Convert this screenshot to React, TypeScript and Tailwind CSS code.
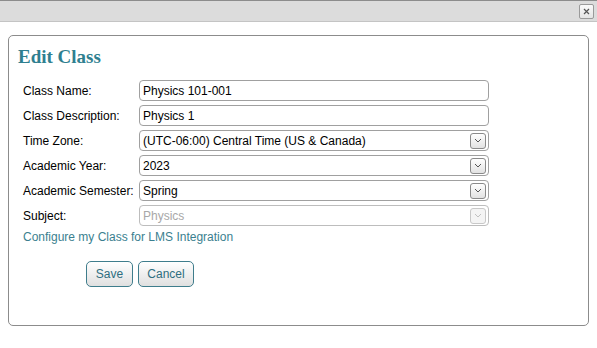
import React from "react";

const rows: { label: string; value: string; select?: boolean; disabled?: boolean }[] = [
  { label: "Class Name:", value: "Physics 101-001" },
  { label: "Class Description:", value: "Physics 1" },
  { label: "Time Zone:", value: "(UTC-06:00) Central Time (US & Canada)", select: true },
  { label: "Academic Year:", value: "2023", select: true },
  { label: "Academic Semester:", value: "Spring", select: true },
  { label: "Subject:", value: "Physics", select: true, disabled: true },
];

const Chevron = ({ disabled }: { disabled?: boolean }) => (
  <div
    className={`flex h-[16px] w-[16px] items-center justify-center rounded-[3px] border ${
      disabled ? "border-[#c8c8c8] bg-[#f4f4f4]" : "border-[#8a8a8a] bg-gradient-to-b from-white to-[#e2e2e2]"
    }`}
  >
    <svg width="8" height="5" viewBox="0 0 8 5">
      <path d="M1 1 L4 4 L7 1" fill="none" stroke={disabled ? "#c0c0c0" : "#555"} strokeWidth="1" />
    </svg>
  </div>
);

export default function App() {
  return (
    <div className="h-[348px] w-[597px] bg-white font-['Liberation_Sans',sans-serif] text-[12px] text-black">
      <div className="flex h-[22px] items-center justify-end border-t border-t-[#8c8c8c] border-b border-b-[#c4c4c4] bg-[#dcdcdc] pr-[3px]">
        <div className="flex h-[15px] w-[15px] items-center justify-center rounded-[2px] border border-[#9a9a9a] bg-gradient-to-b from-[#fafafa] to-[#e4e4e4]">
          <svg width="7" height="7" viewBox="0 0 7 7">
            <path d="M1 1 L6 6 M6 1 L1 6" stroke="#555" strokeWidth="1.2" />
          </svg>
        </div>
      </div>

      <div className="px-[8px] pt-[13px]">
        <div className="h-[291px] rounded-[5px] border border-[#8c8c8c] pl-[9px] pt-[9px]">
          <h1 className="font-['Liberation_Serif',serif] text-[19px] font-bold leading-[24px] text-[#2f7f90]">Edit Class</h1>

          <div className="mt-[11px] flex flex-col gap-[4px] pl-[5px]">
            {rows.map((r) => (
              <div key={r.label} className="flex items-center">
                <div className="w-[116px] shrink-0">{r.label}</div>
                <div
                  className={`flex h-[21px] w-[350px] items-center justify-between rounded-[4px] border pl-[3px] pr-[2px] ${
                    r.disabled ? "border-[#bdbdbd] text-[#a8a8a8]" : "border-[#a0a0a0]"
                  }`}
                >
                  <span>{r.value}</span>
                  {r.select && <Chevron disabled={r.disabled} />}
                </div>
              </div>
            ))}
          </div>

          <div className="mt-[2px] pl-[5px] text-[#3b7f8f]">Configure my Class for LMS Integration</div>

          <div className="mt-[15px] flex gap-[5px] pl-[68px]">
            <button className="h-[26px] w-[47px] rounded-[5px] border border-[#3f7d8c] bg-gradient-to-b from-white to-[#e0e0e0] text-[12px] text-[#2e6e80]">
              Save
            </button>
            <button className="h-[26px] w-[56px] rounded-[5px] border border-[#3f7d8c] bg-gradient-to-b from-white to-[#e0e0e0] text-[12px] text-[#2e6e80]">
              Cancel
            </button>
          </div>
        </div>
      </div>
    </div>
  );
}
